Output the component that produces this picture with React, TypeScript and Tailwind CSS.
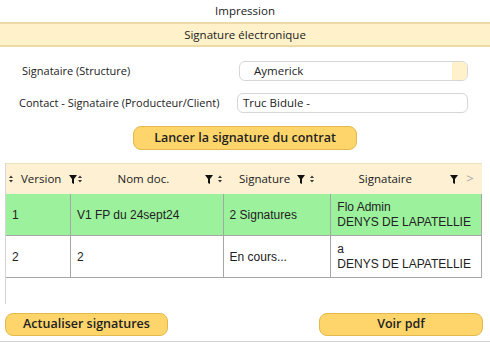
import React from 'react';

const ui = "font-['Open_Sans','Noto_Sans',sans-serif]";
const cell = "font-['Liberation_Sans',Arial,sans-serif]";

function SortIcon() {
  return (
    <svg width="4" height="8" viewBox="0 0 4 8" className="shrink-0">
      <path d="M0 3 L2 0.5 L4 3 Z" fill="#333" />
      <path d="M0 5 L2 7.5 L4 5 Z" fill="#333" />
    </svg>
  );
}

function FilterIcon() {
  return (
    <svg width="8" height="9" viewBox="0 0 8 9" className="shrink-0">
      <path d="M0 0 H8 L5 4 V9 L3 8 V4 Z" fill="#111" />
    </svg>
  );
}

const rows = [
  { version: '1', nom: 'V1 FP du 24sept24', signature: '2 Signatures', l1: 'Flo Admin', l2: 'DENYS DE LAPATELLIE', green: true },
  { version: '2', nom: '2', signature: 'En cours...', l1: 'a', l2: 'DENYS DE LAPATELLIE', green: false },
];

function App() {
  return (
    <div className={`w-[490px] h-[343px] bg-white text-[#222] ${ui} flex flex-col`}>
      <div className="h-[22px] flex items-center justify-center text-[11.5px]">Impression</div>
      <div className="h-[25px] flex items-center justify-center text-[11.5px] bg-[#fff1c9] border-y-2 border-[#ecdba7]">
        Signature électronique
      </div>

      <div className="mt-[14px] flex items-center h-[20px] whitespace-nowrap">
        <div className="pl-[22px] w-[239px] text-[11px]">Signataire (Structure)</div>
        <div className="w-[229px] h-[20px] flex rounded-md border border-[#d6d6d6] overflow-hidden">
          <div className="flex-1 pl-[14px] text-[11.5px] flex items-center">Aymerick</div>
          <div className="w-[15px] bg-[#fff1c9]"></div>
        </div>
      </div>

      <div className="mt-[12px] flex items-center h-[20px] whitespace-nowrap">
        <div className="pl-[19px] w-[237px] text-[11px]">Contact - Signataire (Producteur/Client)</div>
        <div className="w-[231px] h-[20px] rounded-md border border-[#d6d6d6] pl-[5px] text-[11.5px] flex items-center">
          Truc Bidule -
        </div>
      </div>

      <div className="mt-[13px] pl-[133px]">
        <button className="w-[224px] h-[24px] rounded-lg bg-[#fdd56b] border border-[#e3b84c] text-[12.5px] font-semibold flex items-center justify-center">
          Lancer la signature du contrat
        </button>
      </div>

      <div className="mt-[13px] ml-[5px] w-[477px] h-[141px] border-l border-[#d4d4d4] flex flex-col">
        <div className="h-[31px] flex items-center bg-[#fdf0d3] border-t border-[#ecdfbc] text-[11.5px]">
          <div className="w-[70px] flex items-center pl-[3px] gap-[8px]">
            <SortIcon />
            <span>Version</span>
            <FilterIcon />
          </div>
          <div className="w-[139px] flex items-center pl-[2px] pr-[2px]">
            <SortIcon />
            <span className="flex-1 text-center">Nom doc.</span>
            <FilterIcon />
          </div>
          <div className="w-[93px] flex items-center pl-[3px] pr-[2px]">
            <SortIcon />
            <span className="flex-1 text-center pl-[10px]">Signature</span>
            <FilterIcon />
          </div>
          <div className="w-[175px] flex items-center pl-[3px]">
            <SortIcon />
            <span className="flex-1 text-center pl-[6px]">Signataire</span>
            <FilterIcon />
            <span className="w-[24px] text-center text-[#aaa] text-[13px]">&gt;</span>
          </div>
        </div>

        {rows.map((r) => (
          <div
            key={r.version}
            className={`h-[42px] flex border-b border-[#a6a6a6] text-[12px] ${cell} ${r.green ? 'bg-[#9cf19c]' : 'bg-white'}`}
          >
            <div className="w-[65px] pl-[6px] flex items-center border-r border-[#a6a6a6]">{r.version}</div>
            <div className="w-[153px] pl-[6px] flex items-center border-r border-[#a6a6a6] whitespace-nowrap overflow-hidden">{r.nom}</div>
            <div className="w-[108px] pl-[6px] flex items-center border-r border-[#a6a6a6] whitespace-nowrap overflow-hidden">{r.signature}</div>
            <div className="w-[151px] pl-[6px] flex flex-col justify-center leading-[15px] whitespace-nowrap overflow-hidden border-r border-[#a6a6a6]">
              <span>{r.l1}</span>
              <span>{r.l2}</span>
            </div>
          </div>
        ))}
      </div>

      <div className="mt-[9px] flex justify-between px-[5px] pr-[7px]">
        <button className="w-[163px] h-[23px] rounded-lg bg-[#fdd56b] border border-[#e3b84c] text-[12.5px] font-semibold flex items-center justify-center">
          Actualiser signatures
        </button>
        <button className="w-[164px] h-[23px] rounded-lg bg-[#fdd56b] border border-[#e3b84c] text-[12.5px] font-semibold flex items-center justify-center">
          Voir pdf
        </button>
      </div>

      <div className="mt-[5px] border-b border-[#d0d0d0]"></div>
    </div>
  );
}

export default App;
